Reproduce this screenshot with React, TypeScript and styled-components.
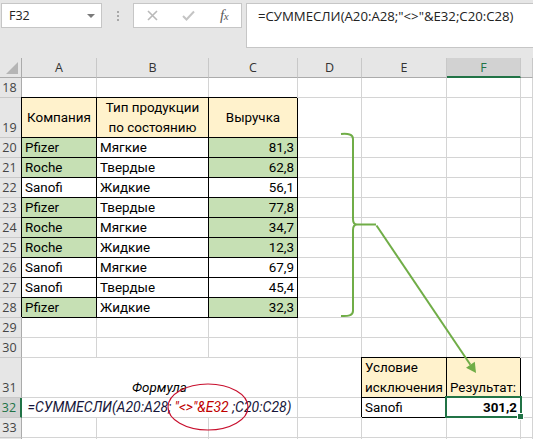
import React from "react";
import styled, { createGlobalStyle, css } from "styled-components";

const GlobalStyle = createGlobalStyle`
  html, body { margin: 0; padding: 0; background: #fff; overflow: hidden; }
  #root { width: 533px; height: 439px; }
`;

const UI_FONT = `"Open Sans", "Noto Sans", sans-serif`;
const CELL_FONT = `Roboto, "Noto Sans", sans-serif`;

const YELLOW = "#fff2cc";
const GREEN = "#c6e0b4";
const EXCEL_GREEN = "#217346";

const Page = styled.div`
  position: relative;
  width: 533px;
  height: 439px;
  overflow: hidden;
  background: #e6e6e6;
  font-family: ${CELL_FONT};
`;

const FormulaBar = styled.div`
  box-sizing: border-box;
  height: 58px;
  display: flex;
  align-items: flex-start;
  padding: 3px 0 0 1px;
`;

const NameBox = styled.div`
  box-sizing: border-box;
  width: 101px;
  height: 25px;
  background: #fff;
  border: 1px solid #c6c6c6;
  display: flex;
  align-items: center;
  justify-content: space-between;
  padding: 0 6px 0 7px;
  font: 12.5px ${UI_FONT};
  color: #222;
`;

const Caret = styled.span`
  width: 0;
  height: 0;
  border-left: 4px solid transparent;
  border-right: 4px solid transparent;
  border-top: 4px solid #7a7a7a;
`;

const Grip = styled.div`
  width: 31px;
  height: 25px;
  display: flex;
  flex-direction: column;
  align-items: center;
  justify-content: center;
  gap: 2px;
`;

const GripDot = styled.span`
  width: 2px;
  height: 2px;
  background: #a8a8a8;
`;

const FxBox = styled.div`
  box-sizing: border-box;
  width: 109px;
  height: 25px;
  background: #fff;
  border: 1px solid #c6c6c6;
  display: grid;
  grid-template-columns: repeat(3, 36px);
  align-items: center;
  justify-items: center;
`;

const FxLabel = styled.span`
  font-family: "Liberation Serif", "DejaVu Serif", serif;
  font-style: italic;
  font-size: 15px;
  color: #5a5a5a;
  letter-spacing: -0.5px;
  & > small {
    font-size: 11px;
  }
`;

const FormulaInput = styled.div`
  box-sizing: border-box;
  flex: 1;
  margin-left: 4px;
  height: 45px;
  background: #fff;
  border: 1px solid #c6c6c6;
  border-right: none;
  padding: 3px 0 0 11px;
  font: 13.2px/18px ${UI_FONT};
  color: #222;
  white-space: nowrap;
`;

const Sheet = styled.div`
  display: grid;
  grid-template-columns: 22px 75px 112px 89px 64px 85px 74px 1fr;
  grid-template-rows: 20px 20px 40px repeat(9, 20px) 20px 20px 40px 20px 20px 20px;
  background: #fff;
`;

const Corner = styled.div`
  box-sizing: border-box;
  position: relative;
  background: #e6e6e6;
  border-right: 1px solid #ababab;
  border-bottom: 1px solid #ababab;
  &::after {
    content: "";
    position: absolute;
    right: 3px;
    bottom: 3px;
    width: 0;
    height: 0;
    border-left: 12px solid transparent;
    border-bottom: 12px solid #b5b5b5;
  }
`;

const ColHeader = styled.div<{ $active?: boolean }>`
  box-sizing: border-box;
  display: flex;
  align-items: center;
  justify-content: center;
  background: ${(p) => (p.$active ? "#d2d2d2" : "#e6e6e6")};
  border-right: 1px solid #c8c8c8;
  border-bottom: ${(p) => (p.$active ? `2px solid ${EXCEL_GREEN}` : "1px solid #ababab")};
  padding-top: ${(p) => (p.$active ? "1px" : "0")};
  font: 12.5px ${UI_FONT};
  color: ${(p) => (p.$active ? EXCEL_GREEN : "#333")};
`;

const RowHeader = styled.div<{ $active?: boolean; $tall?: boolean }>`
  box-sizing: border-box;
  display: flex;
  align-items: ${(p) => (p.$tall ? "flex-end" : "center")};
  justify-content: center;
  padding-right: 2px;
  background: ${(p) => (p.$active ? "#d2d2d2" : "#e6e6e6")};
  border-right: ${(p) => (p.$active ? `2px solid ${EXCEL_GREEN}` : "1px solid #ababab")};
  border-bottom: 1px solid #c8c8c8;
  font: 12.5px/19px ${UI_FONT};
  color: ${(p) => (p.$active ? EXCEL_GREEN : "#444")};
`;

type CellProps = {
  $fill?: string;
  $boxed?: boolean;
  $align?: "left" | "center" | "right";
  $valign?: "center" | "end";
  $bold?: boolean;
  $italic?: boolean;
  $span?: number;
  $selected?: boolean;
};

const Cell = styled.div<CellProps>`
  box-sizing: border-box;
  min-width: 0;
  display: flex;
  flex-direction: column;
  justify-content: ${(p) => (p.$valign === "end" ? "flex-end" : "center")};
  align-items: ${(p) =>
    p.$align === "center" ? "center" : p.$align === "right" ? "flex-end" : "flex-start"};
  text-align: ${(p) => p.$align ?? "left"};
  padding: 0 3px;
  grid-column: span ${(p) => p.$span ?? 1};
  background: ${(p) => p.$fill ?? "#fff"};
  border-right: 1px solid ${(p) => (p.$boxed ? "#000" : "#d4d4d4")};
  border-bottom: 1px solid ${(p) => (p.$boxed ? "#000" : "#d4d4d4")};
  ${(p) =>
    p.$boxed &&
    css`
      box-shadow: -1px -1px 0 0 #000;
    `}
  ${(p) =>
    p.$selected &&
    css`
      position: relative;
    `}
  white-space: nowrap;
  font-family: ${CELL_FONT};
  font-size: 13.4px;
  line-height: 19.5px;
  font-weight: ${(p) => (p.$bold ? 700 : 400)};
  font-style: ${(p) => (p.$italic ? "italic" : "normal")};
  color: #000;
`;

const Selection = styled.div`
  position: absolute;
  left: -2px;
  top: -2px;
  right: -2px;
  bottom: -1px;
  border: 2px solid ${EXCEL_GREEN};
  pointer-events: none;
  &::after {
    content: "";
    position: absolute;
    right: -4px;
    bottom: -4px;
    width: 5px;
    height: 5px;
    background: ${EXCEL_GREEN};
    border: 1px solid #fff;
  }
`;

const FormulaText = styled.span`
  font-size: 14px;
  color: #16163a;
`;

const RedText = styled.span`
  color: #c00000;
`;

const Overlay = styled.svg`
  position: absolute;
  left: 0;
  top: 0;
  pointer-events: none;
`;

const COLS = ["A", "B", "C", "D", "E", "F", "G"];

const DATA: [string, string, string, boolean][] = [
  ["Pfizer", "Мягкие", "81,3", true],
  ["Roche", "Твердые", "62,8", true],
  ["Sanofi", "Жидкие", "56,1", false],
  ["Pfizer", "Твердые", "77,8", true],
  ["Roche", "Мягкие", "34,7", true],
  ["Roche", "Жидкие", "12,3", true],
  ["Sanofi", "Мягкие", "67,9", false],
  ["Sanofi", "Твердые", "45,4", false],
  ["Pfizer", "Жидкие", "32,3", true],
];

const EmptyCells: React.FC<{ count: number; prefix: string }> = ({ count, prefix }) => (
  <>
    {Array.from({ length: count }, (_, i) => (
      <Cell key={`${prefix}-${i}`} />
    ))}
  </>
);

export default function App() {
  return (
    <Page>
      <GlobalStyle />
      <FormulaBar>
        <NameBox>
          <span>F32</span>
          <Caret />
        </NameBox>
        <Grip>
          <GripDot />
          <GripDot />
          <GripDot />
        </Grip>
        <FxBox>
          <svg width="11" height="11" viewBox="0 0 11 11">
            <path d="M1 1 L10 10 M10 1 L1 10" stroke="#b9b9b9" strokeWidth="1.6" fill="none" />
          </svg>
          <svg width="13" height="11" viewBox="0 0 13 11">
            <path d="M1 6 L4.5 9.5 L12 1.5" stroke="#c4c4c4" strokeWidth="2" fill="none" />
          </svg>
          <FxLabel>
            f<small>x</small>
          </FxLabel>
        </FxBox>
        <FormulaInput>=СУММЕСЛИ(A20:A28;"&lt;&gt;"&amp;E32;C20:C28)</FormulaInput>
      </FormulaBar>

      <Sheet>
        <Corner />
        {COLS.map((c) => (
          <ColHeader key={c} $active={c === "F"}>
            {c === "G" ? "" : c}
          </ColHeader>
        ))}

        <RowHeader>18</RowHeader>
        <EmptyCells count={7} prefix="r18" />

        <RowHeader $tall>19</RowHeader>
        <Cell $boxed $fill={YELLOW} $align="center">
          Компания
        </Cell>
        <Cell $boxed $fill={YELLOW} $align="center">
          <span>Тип продукции</span>
          <span>по состоянию</span>
        </Cell>
        <Cell $boxed $fill={YELLOW} $align="center">
          Выручка
        </Cell>
        <EmptyCells count={4} prefix="r19" />

        {DATA.map(([company, type, value, hi], i) => (
          <React.Fragment key={i}>
            <RowHeader>{20 + i}</RowHeader>
            <Cell $boxed $fill={hi ? GREEN : "#fff"}>
              {company}
            </Cell>
            <Cell $boxed>{type}</Cell>
            <Cell $boxed $fill={hi ? GREEN : "#fff"} $align="right">
              {value}
            </Cell>
            <EmptyCells count={4} prefix={`r${20 + i}`} />
          </React.Fragment>
        ))}

        <RowHeader>29</RowHeader>
        <EmptyCells count={7} prefix="r29" />
        <RowHeader>30</RowHeader>
        <EmptyCells count={7} prefix="r30" />

        <RowHeader $tall>31</RowHeader>
        <Cell $span={3} $align="center" $valign="end" $italic>
          Формула
        </Cell>
        <Cell />
        <Cell $boxed $fill={YELLOW} $valign="end">
          <span>Условие</span>
          <span>исключения</span>
        </Cell>
        <Cell $boxed $fill={YELLOW} $valign="end">
          Результат:
        </Cell>
        <Cell />

        <RowHeader $active>32</RowHeader>
        <Cell $span={3} $align="center" $italic>
          <FormulaText>
            =СУММЕСЛИ(A20:A28; <RedText>"&lt;&gt;"&amp;E32</RedText> ;C20:C28)
          </FormulaText>
        </Cell>
        <Cell />
        <Cell $boxed>Sanofi</Cell>
        <Cell $boxed $bold $align="right" $selected>
          301,2
          <Selection />
        </Cell>
        <Cell />

        <RowHeader>33</RowHeader>
        <EmptyCells count={7} prefix="r33" />
        <RowHeader />
        <EmptyCells count={7} prefix="r34" />
      </Sheet>

      <Overlay width="533" height="439" viewBox="0 0 533 439">
        <path
          d="M341 134 C348 133.5 353 134 353 139 L353 219 C353 223 354 224.5 357 224.5 L376 224.5 M357 224.5 C354 224.5 353 226 353 230 L353 311 C353 315.5 348 316.5 341 316"
          stroke="#70ad47"
          strokeWidth="2"
          fill="none"
        />
        <line x1="376.5" y1="225.5" x2="470.4" y2="364.7" stroke="#70ad47" strokeWidth="2" />
        <polygon points="476,373 474.8,361.7 466,367.7" fill="#70ad47" />
        <ellipse cx="208" cy="407" rx="40" ry="23" stroke="#c8102e" strokeWidth="1.2" fill="none" />
      </Overlay>
    </Page>
  );
}
